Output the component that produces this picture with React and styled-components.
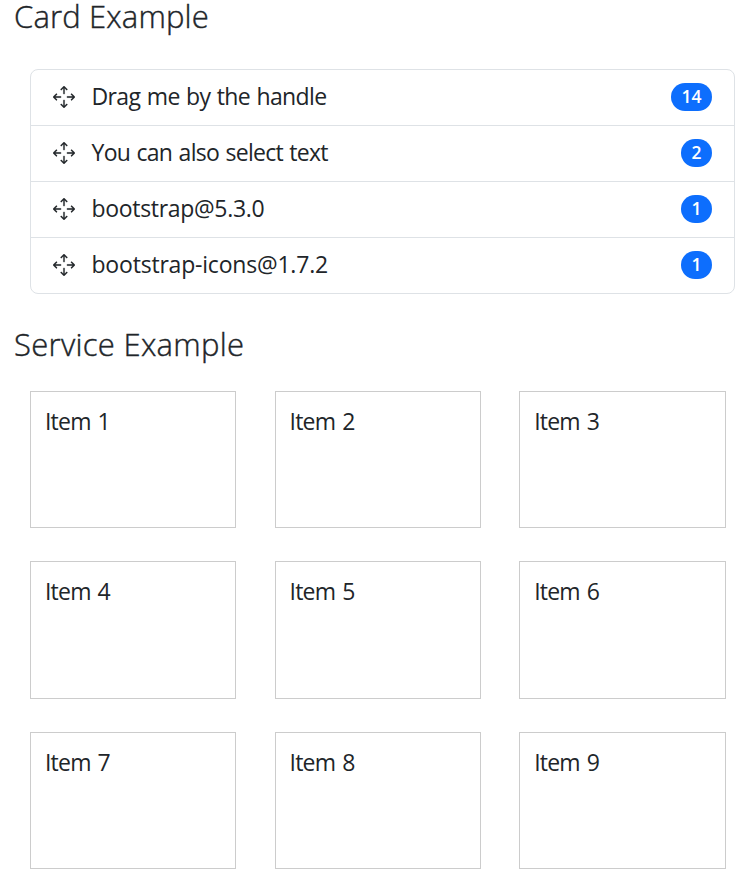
import React from "react";
import styled, { createGlobalStyle } from "styled-components";
import { BsArrowsMove } from "react-icons/bs";

const GlobalStyle = createGlobalStyle`
  *, *::before, *::after { box-sizing: border-box; }
  body {
    margin: 0;
    background: #fff;
    color: #212529;
    font-family: "Open Sans", "Noto Sans", sans-serif;
    font-size: 23px;
    line-height: 32px;
  }
`;

const Page = styled.main`
  height: 887px;
`;

const Heading = styled.h4`
  margin: 0;
  padding-left: 14px;
  height: 34px;
  font-size: 31px;
  line-height: 33px;
  font-weight: 300;
  letter-spacing: ${(p) => p.$tracking}px;
  -webkit-text-stroke: 0.4px currentColor;
`;

const List = styled.ul`
  list-style: none;
  margin: 35px 14px 34px 30px;
  padding: 0;
  border: 1px solid #dee2e6;
  border-radius: 8px;
`;

const Row = styled.li`
  display: flex;
  align-items: center;
  height: 56px;
  padding: 0 22px 2px 22px;
  & + & { border-top: 1px solid #dee2e6; }
  &:first-child { height: 55px; }
`;

const Handle = styled(BsArrowsMove)`
  flex: none;
  width: 22px;
  height: 22px;
  margin: 0 17px 0 0;
  stroke-width: 0.1px;
  cursor: grab;
`;

const Label = styled.span`
  flex: 1;
  padding-bottom: 1px;
  margin-left: -0.5px;
  letter-spacing: ${(p) => p.$tracking}px;
  word-spacing: 1px;
`;

const Badge = styled.span`
  height: 28px;
  padding: 0 10.5px;
  border-radius: 14px;
  background: #0d6efd;
  color: #fff;
  font-size: 17.5px;
  font-weight: 600;
  line-height: 27px;
`;

const Grid = styled.div`
  display: grid;
  grid-template-columns: repeat(3, 206.4px);
  grid-auto-rows: 137.3px;
  gap: 33.1px 38.2px;
  margin: 29px 0 0 30px;
`;

const Cell = styled.div`
  padding: 13px 14px;
  border: 1px solid #ccc;
  letter-spacing: -0.8px;
  word-spacing: 1.8px;
`;

const rows = [
  { text: "Drag me by the handle", count: 14, tracking: -0.62 },
  { text: "You can also select text", count: 2, tracking: -0.7 },
  { text: "bootstrap@5.3.0", count: 1, tracking: -0.31 },
  { text: "bootstrap-icons@1.7.2", count: 1, tracking: -0.2 },
];

export default function App() {
  return (
    <Page>
      <GlobalStyle />
      <Heading $tracking={0.15}>Card Example</Heading>
      <List>
        {rows.map((row) => (
          <Row key={row.text}>
            <Handle />
            <Label $tracking={row.tracking}>{row.text}</Label>
            <Badge>{row.count}</Badge>
          </Row>
        ))}
      </List>
      <Heading $tracking={0.3}>Service Example</Heading>
      <Grid>
        {Array.from({ length: 9 }, (_, i) => (
          <Cell key={i}>Item {i + 1}</Cell>
        ))}
      </Grid>
    </Page>
  );
}
